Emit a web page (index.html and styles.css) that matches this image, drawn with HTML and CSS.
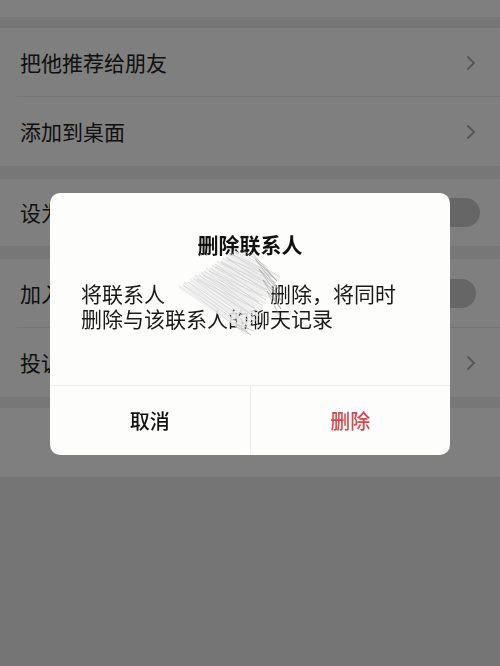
FILE: index.html
```html
<!DOCTYPE html>
<html lang="zh-CN">
<head>
<meta charset="utf-8">
<title>删除联系人</title>
<link rel="stylesheet" href="styles.css">
</head>
<body>
<div class="page">
  <div class="card card-top"></div>

  <div class="card">
    <div class="row sep">
      <span class="label">把他推荐给朋友</span>
      <svg class="chev" viewBox="0 0 10 16"><polyline points="1.5,1.5 8,8 1.5,14.5"/></svg>
    </div>
    <div class="row">
      <span class="label">添加到桌面</span>
      <svg class="chev" viewBox="0 0 10 16"><polyline points="1.5,1.5 8,8 1.5,14.5"/></svg>
    </div>
  </div>

  <div class="card">
    <div class="row row-short">
      <span class="label">设为星标朋友</span>
      <span class="toggle"></span>
    </div>
  </div>

  <div class="card">
    <div class="row sep">
      <span class="label">加入黑名单</span>
      <span class="toggle"></span>
    </div>
    <div class="row">
      <span class="label">投诉</span>
      <svg class="chev" viewBox="0 0 10 16"><polyline points="1.5,1.5 8,8 1.5,14.5"/></svg>
    </div>
  </div>

  <div class="card last-gap">
    <div class="row row-center"><span class="danger">删除</span></div>
  </div>
</div>

<div class="mask"></div>

<div class="dialog">
  <div class="dialog-title">删除联系人</div>
  <div class="dialog-body">将联系人<span class="name-gap"></span>删除，将同时删除与该联系人的聊天记录</div>
  <div class="dialog-actions">
    <div class="btn btn-cancel">取消</div>
    <div class="btn btn-delete">删除</div>
  </div>
  <svg class="scribble" viewBox="0 0 115 90">
    <path class="sc-wide" d="M60,5 L103,33 L54,8 L100,39 L49,12 L96,44 L43,15 L93,50 L38,19 L89,56 L32,22 L86,62 L27,26 L82,68 L21,29 L79,73 L16,33 L75,79 L10,36 L72,85 L5,40"/>
    <path class="sc-fine" d="M63,4 L105,30 L57,7 L101,36 L51,10 L98,42 L46,14 L95,47 L40,17 L91,53 L35,21 L88,59 L29,24 L84,65 L24,28 L80,70 L18,31 L77,76 L13,35 L74,82 L8,38 L70,87"/>
    <path class="sc-fine2" d="M58,8 L98,30 L52,12 L95,37 L46,16 L92,43 L40,20 L88,49 L34,24 L84,55 L28,28 L80,61 L22,32 L76,67"/>
    <path class="sc-dark" d="M76,5 L102,34 L80,12 L105,44 L84,22 L107,54 L88,33 L106,62 L92,44 L104,68"/>
    <path class="sc-dark2" d="M68,3 L92,20 M62,80 L76,88 L60,76 L78,84"/>
  </svg>
</div>
</body>
</html>
```

FILE: styles.css
```css
* { box-sizing: border-box; }

html, body {
  margin: 0;
  padding: 0;
}

body {
  width: 500px;
  height: 666px;
  overflow: hidden;
  background: #eaeaea;
  font-family: "Noto Sans CJK SC", "Noto Sans", sans-serif;
}

.page {
  display: flex;
  flex-direction: column;
  background: #eeeeee;
}

.card {
  background: #ffffff;
  display: flex;
  flex-direction: column;
}

.card + .card { margin-top: 13px; }
.card-top { height: 17px; }
.card-top + .card { margin-top: 11px; }
.card.last-gap { margin-top: 11px; }

.row {
  height: 69px;
  display: flex;
  align-items: center;
  justify-content: space-between;
  padding: 0 24px 0 20px;
  position: relative;
}

.row.sep::after {
  content: "";
  position: absolute;
  left: 17px;
  right: 0;
  bottom: 0;
  height: 1px;
  background: #ececec;
}

.row-short { height: 67px; padding-right: 20px; }

.label {
  font-size: 21px;
  color: #222;
  line-height: 1;
}

.chev {
  width: 10px;
  height: 16px;
  fill: none;
  stroke: #aaaaaa;
  stroke-width: 1.8;
}

.toggle {
  width: 56px;
  height: 29px;
  border-radius: 15px;
  background: #cccccc;
}

.row-center { justify-content: center; }
.danger { font-size: 21px; color: #d9464a; }

.mask {
  position: fixed;
  inset: 0;
  background: rgba(0, 0, 0, 0.5);
}

.dialog {
  position: fixed;
  left: 50px;
  top: 193px;
  width: 400px;
  height: 262px;
  background: #fdfdfc;
  border-radius: 10px;
  display: flex;
  flex-direction: column;
  overflow: hidden;
}

.dialog-title {
  margin-top: 36px;
  text-align: center;
  font-size: 21px;
  font-weight: 700;
  line-height: 30px;
  color: #111;
}

.dialog-body {
  margin-top: 22px;
  padding: 0 40px 0 31px;
  font-size: 21px;
  line-height: 25px;
  color: #1a1a1a;
}

.name-gap {
  display: inline-block;
  width: 105px;
  height: 1px;
}

.dialog-actions {
  margin-top: auto;
  height: 70px;
  display: flex;
  border-top: 1px solid #eeeeee;
}

.btn {
  flex: 1;
  display: flex;
  align-items: center;
  justify-content: center;
  font-size: 20px;
  font-weight: 500;
}

.btn-cancel {
  color: #111;
  border-right: 1px solid #eeeeee;
}

.btn-delete { color: #d9464a; }

.scribble {
  position: absolute;
  left: 125px;
  top: 54px;
  width: 115px;
  height: 90px;
  fill: none;
  stroke-linecap: round;
  stroke-linejoin: round;
}

.sc-wide { stroke: #ececec; stroke-width: 3; opacity: 0.9; }
.sc-fine { stroke: #d4d4d4; stroke-width: 0.8; opacity: 0.9; }
.sc-fine2 { stroke: #c8c8c8; stroke-width: 0.6; opacity: 0.8; }
.sc-dark { stroke: #a0a0a0; stroke-width: 0.8; opacity: 0.8; }
.sc-dark2 { stroke: #b4b4b4; stroke-width: 0.8; opacity: 0.7; }
```
